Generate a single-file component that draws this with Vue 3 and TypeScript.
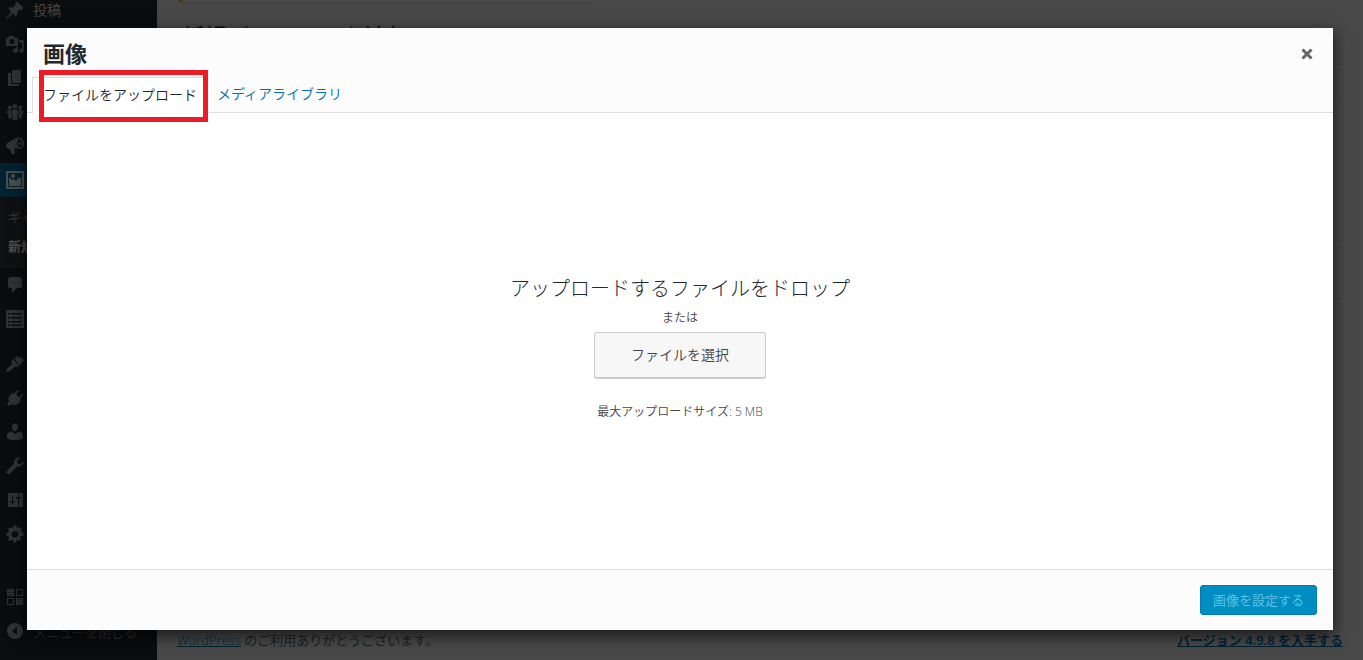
<script setup lang="ts">
import { ref } from 'vue'

interface MenuItem {
  name: string
  icon: string
  label?: string
  current?: boolean
  gap?: boolean
  submenu?: { text: string; strong?: boolean }[]
}

const menu: MenuItem[] = [
  {
    name: '投稿',
    label: '投稿',
    icon: 'M10.4 3l1-.9 1.4.1 5.3 5.2-.2 1.5-1.1.9-2.2-.3-2.5 2.4.2 3.2-1.6 1.1-2.8-2.9L2 18.7 1.3 18l5-6.3-2.8-2.9 1-1.5 3.3.1 2.7-2.5z',
  },
  {
    name: 'メディア',
    icon: 'M1 4h2l1-2h5l1 2h3v8H1zM7 5a2.500 2.500 0 1 0 0 5 2.500 2.500 0 0 0 0-5zM14 6h5v10.500a2.400 2.400 0 1 1-2-2.300V9h-3zM11 13h2v3.500a2.400 2.400 0 1 1-2-2.300z',
  },
  { name: '固定ページ', icon: 'M7 2h9v13H7zM3 5h3v11h8v2H3z' },
  {
    name: 'グループ',
    icon: 'M10 2a2.300 2.300 0 1 1 0 4.600A2.300 2.300 0 0 1 10 2zM5 3.500a2 2 0 1 1 0 4 2 2 0 0 1 0-4zM15 3.500a2 2 0 1 1 0 4 2 2 0 0 1 0-4zM7.500 7.500h5L14 11l-1.500 1.500V18h-5v-5.500L6 11zM2.500 8h4L5 11l1.500 2v3.500h-3V13L2 11zM13.500 8h4l.8 3-1.500 2v3.500h-3V13L15 11z',
  },
  {
    name: 'お知らせ',
    icon: 'M14 1.500c2.800 0 5 2.700 5 6s-2 5.500-4.500 5.500c-2.500-.8-4-1-5.500-.5l1 5.500H6.500L5 13c-2.500 0-4-1.200-4-3.200S2.500 6.500 5 5.500s5-4 9-4zm.2 1.700c-1.500 0-2.200 1.800-2 4.300s1.300 4 2.600 4 2.200-1.700 2.200-4-1.300-4.300-2.800-4.300zm.3 2.300c.9 0 1.400 1 1.400 2s-.5 2-1.100 2-1.300-1-1.300-2 .3-2 1-2z',
  },
  {
    name: 'ギャラリー',
    current: true,
    icon: 'M1 1h18v18H1zM3 3v14h14V3zM8 4a2 2 0 1 1 0 4 2 2 0 0 1 0-4zM4 7l3 3 2-1 2 2 3-4 2 2v7H4z',
    submenu: [{ text: 'ギャラリー' }, { text: '新規追加', strong: true }],
  },
  { name: 'コメント', icon: 'M5 2h10l2 2v8l-2 1h-3l-5 5v-5H5l-2-1V4z' },
  {
    name: 'フォーム',
    icon: 'M1 1h18v18H1zM3 4v1.500h2V4zM6 4v1.500h11V4zM3 8v1.500h2V8zM6 8v1.500h11V8zM3 12v1.500h2V12zM6 12v1.500h11V12zM3 15.500V17h2v-1.500zM6 15.500V17h11v-1.500z',
  },
  {
    name: '外観',
    gap: true,
    icon: 'M9.500 4.500L12 2l1.500 1.500L16 3l3 3-4.500 5.500zM8.500 5.500l5.500 6-1.500 1.500-2.500-.5L3.500 18 1.500 17.500 1 16l6-6-.5-2.500z',
  },
  {
    name: 'プラグイン',
    icon: 'M12.500 2.200c.8-.8 2 .4 1.200 1.200L11 6.200l3 3 2.700-2.800c.8-.8 2 .4 1.200 1.200L15.200 10.400l.8.900-2.500 4c-2.500 2-5 2-7 .7L3.500 18 2 16.500l2-3c-1-2.500-.5-4.500 1-6l3-2.800.8.800z',
  },
  {
    name: 'ユーザー',
    icon: 'M10 1.500c2 0 3 1.500 3 3.500s-1.300 4-3 4-3-2-3-4 1-3.500 3-3.500zM6 9.500l4 2.500 4-2.500c2.500.5 4 2 4 4.500v2.500c-4 2-12 2-16 0V14c0-2.500 1.500-4 4-4.500z',
  },
  {
    name: 'ツール',
    icon: 'M16.700 9.300c-1.300 1.300-3 1.700-4.700 1.200L5 17.500c-.8.8-2 .8-2.800 0s-.8-2 0-2.800l7-7c-.5-1.700-.1-3.500 1.300-4.800 1.300-1.300 3.200-1.700 4.800-1.100l-3.300 3.200.8 2.400 2.400.8 3.200-3.300c.5 1.500 0 3.200-1.700 4.400z',
  },
  {
    name: '設定項目',
    icon: 'M3 3h15v14H3zM7 5v6H5v1.500h2V15h1v-2.500h2V11H8V5zM13 5v2h-2v1.500h2V15h1V8.500h2V7h-2V5z',
  },
  {
    name: '設定',
    icon: 'M18 12h-2.200l-.9 1.500 1.500 1.700-1.800 1.800-1.700-1.300-1.500.7V18.500H8.600l-.6-2.100-1.500-.7-1.900 1.200L3 15.400l1.200-1.900-.7-1.500H1.500V9l2-.7.6-1.500L3 5l1.800-1.800 1.700 1.100L8 3.700 8.500 1.500h2.900l.6 2.200 1.500.6 1.800-1.200L17 5l-1.300 1.700.7 1.600 2.100.7v3zM10 7a3.300 3.300 0 1 0 0 6.600A3.300 3.300 0 0 0 10 7z',
  },
]

const tabs = ['ファイルをアップロード', 'メディアライブラリ']
const activeTab = ref(0)
const picker = ref<HTMLInputElement | null>(null)
</script>

<template>
  <div class="admin">
    <nav class="sidebar" aria-label="管理メニュー">
      <ul class="menu">
        <li v-for="item in menu" :key="item.name" :class="{ current: item.current, gap: item.gap }">
          <a href="#" class="menu-link" :aria-label="item.name">
            <svg class="icon" viewBox="0 0 20 20" aria-hidden="true">
              <path :d="item.icon" fill-rule="evenodd" />
            </svg>
            <span v-if="item.label">{{ item.label }}</span>
          </a>
          <ul v-if="item.submenu" class="submenu">
            <li v-for="sub in item.submenu" :key="sub.text">
              <a href="#" :class="{ strong: sub.strong }">{{ sub.text }}</a>
            </li>
          </ul>
        </li>
        <li class="gap-large">
          <a href="#" class="menu-link" aria-label="QR">
            <svg class="icon" viewBox="0 0 20 20" aria-hidden="true">
              <path
                fill-rule="evenodd"
                d="M2 2h7v7H2zM4 3v1h1V3zM6 3v1h1V3zM3 5v1h1V5zM5 5v1h1V5zM7 5v1h1V5zM4 7v1h1V7zM6 7v1h1V7zM11 2h7v7h-7zM12 3v5h5V3zM2 11h7v7H2zM3 12v5h5v-5zM11 11h7v7h-7zM13 12v1h1v-1zM15 12v1h1v-1zM12 14v1h1v-1zM14 14v1h1v-1zM16 14v1h1v-1zM13 16v1h1v-1zM15 16v1h1v-1z"
              />
            </svg>
          </a>
        </li>
        <li>
          <button type="button" class="menu-link collapse">
            <svg class="icon" viewBox="0 0 20 20" aria-hidden="true">
              <path fill-rule="evenodd" d="M10 2a8 8 0 1 0 0 16 8 8 0 0 0 0-16zM12 6v8L7 10z" />
            </svg>
            <span>メニューを閉じる</span>
          </button>
        </li>
      </ul>
    </nav>

    <main class="content">
      <div class="notice"></div>
      <h1>新規ギャラリーを追加</h1>
      <section class="postbox">
        <div class="postbox-head"></div>
        <div class="postbox-body"></div>
        <div class="postbox-actions"></div>
      </section>
      <footer class="page-footer">
        <span><a href="#">WordPress</a> のご利用ありがとうございます。</span>
        <a href="#" class="strong">バージョン 4.9.8 を入手する</a>
      </footer>
    </main>

    <div class="backdrop"></div>

    <div class="modal" role="dialog" aria-modal="true" aria-labelledby="modal-title">
      <header class="modal-head">
        <div class="title-row">
          <h2 id="modal-title">画像</h2>
          <button type="button" class="close" aria-label="閉じる">
            <svg viewBox="0 0 12 12" aria-hidden="true">
              <path d="M1.500 1.500l9 9M10.500 1.500l-9 9" />
            </svg>
          </button>
        </div>
        <div class="tabs" role="tablist">
          <button
            v-for="(tab, i) in tabs"
            :key="tab"
            type="button"
            role="tab"
            class="tab"
            :class="{ active: activeTab === i }"
            :aria-selected="activeTab === i"
            @click="activeTab = i"
          >
            {{ tab }}
          </button>
          <span class="highlight" aria-hidden="true"></span>
        </div>
      </header>
      <div class="uploader">
        <h3>アップロードするファイルをドロップ</h3>
        <p class="or">または</p>
        <button type="button" class="browse" @click="picker?.click()">ファイルを選択</button>
        <input ref="picker" type="file" hidden aria-label="ファイルを選択" />
        <p class="limit">最大アップロードサイズ: 5 MB</p>
      </div>
      <footer class="modal-foot">
        <button type="button" class="primary" disabled>画像を設定する</button>
      </footer>
    </div>
  </div>
</template>

<style>
body {
  margin: 0;
  background: #f1f1f1;
}
</style>

<style scoped>
.admin {
  position: relative;
  display: flex;
  height: 100vh;
  overflow: hidden;
  background: #f1f1f1;
  color: #444;
  font-family: 'Open Sans', 'Noto Sans CJK JP', sans-serif;
  font-size: 13px;
  font-weight: 350;
  line-height: 20px;
}

button {
  font-family: inherit;
  font-weight: inherit;
  cursor: pointer;
}

h1,
h2,
h3,
p,
ul {
  margin: 0;
  padding: 0;
}

ul {
  list-style: none;
}

.sidebar {
  flex: none;
  width: 157px;
  background: #23282d;
}

/* The menu is scrolled up slightly with the page. */
.menu {
  margin-top: -7px;
}

.menu-link {
  display: flex;
  align-items: center;
  gap: 8px;
  box-sizing: border-box;
  width: 100%;
  height: 34px;
  padding: 0 5px;
  color: #eee;
  font-size: 14px;
  text-decoration: none;
}

.icon {
  flex: none;
  width: 20px;
  height: 20px;
  fill: #9ea3a8;
}

.current > .menu-link {
  background: #0073aa;
}

.current .icon {
  fill: #fff;
}

.gap {
  margin-top: 11px;
}

.gap-large {
  margin-top: 29px;
}

.submenu {
  padding: 6px 0 7px;
  background: #32373c;
}

.submenu a {
  display: block;
  padding: 0 8px;
  color: #b4b9be;
  line-height: 29px;
  text-decoration: none;
}

.submenu a.strong {
  color: #fff;
  font-weight: 600;
}

.collapse {
  border: 0;
  background: none;
  color: #a0a5aa;
  font-size: 13px;
}

.content {
  display: flex;
  flex: 1;
  flex-direction: column;
  min-width: 0;
  padding: 0 20px;
}

.notice {
  width: 410px;
  height: 2px;
  border-left: 4px solid #ffb900;
  margin-left: 2px;
  background: #fff;
  box-shadow: 0 1px 1px rgba(0, 0, 0, 0.1);
}

h1 {
  margin: 18px 0 0 4px;
  color: #23282d;
  font-size: 23px;
  font-weight: 400;
  line-height: 32px;
}

.postbox {
  align-self: flex-end;
  width: 280px;
  margin-top: 12px;
  border: 1px solid #e5e5e5;
  background: #f5f5f5;
}

.postbox-head {
  height: 35px;
  border-bottom: 1px solid #e5e5e5;
}

.postbox-body {
  height: 146px;
  border-bottom: 1px solid #ddd;
}

.postbox-actions {
  height: 50px;
}

.page-footer {
  display: flex;
  justify-content: space-between;
  margin-top: auto;
  padding-bottom: 10px;
  color: #555d66;
}

.page-footer a {
  color: #0073aa;
}

.page-footer .strong {
  font-weight: 600;
}

.backdrop {
  position: absolute;
  inset: 0;
  background: rgba(0, 0, 0, 0.7);
}

.modal {
  position: absolute;
  inset: 28px 30px 30px 27px;
  display: flex;
  flex-direction: column;
  background: #fff;
  box-shadow: 0 5px 15px rgba(0, 0, 0, 0.7);
}

.modal-head {
  border-bottom: 1px solid #ddd;
  background: #fcfcfc;
}

.title-row {
  display: flex;
  align-items: center;
  justify-content: space-between;
  height: 49px;
  padding: 0 16px;
}

h2 {
  color: #23282d;
  font-size: 22px;
  font-weight: 700;
  line-height: 50px;
}

.close {
  display: flex;
  padding: 6px 4px 4px;
  border: 0;
  background: none;
}

.close svg {
  width: 12px;
  height: 12px;
  stroke: #666;
  stroke-width: 3;
}

.tabs {
  position: relative;
  display: flex;
  margin-bottom: -1px;
  padding-left: 6px;
}

.tab {
  box-sizing: border-box;
  height: 36px;
  padding: 0 10px 2px;
  border: 0;
  background: none;
  color: #0073aa;
  font-size: 14px;
  line-height: 34px;
}

.tab.active {
  margin: 0 -1px;
  padding-bottom: 3px;
  border: 1px solid #ddd;
  border-bottom: 0;
  background: #fff;
  color: #23282d;
}

.highlight {
  position: absolute;
  top: -7px;
  left: 12px;
  box-sizing: border-box;
  width: 169px;
  height: 52px;
  border: 5px solid #ed1c24;
  pointer-events: none;
}

.uploader {
  display: flex;
  flex: 1;
  flex-direction: column;
  align-items: center;
  justify-content: center;
  padding-top: 14px;
}

h3 {
  color: #23282d;
  font-size: 20px;
  font-weight: 300;
  line-height: 28px;
}

.or {
  margin: 6px 0 5px;
  font-size: 12px;
  line-height: 18px;
}

.browse {
  height: 46px;
  padding: 0 36px 2px;
  border: 1px solid #ccc;
  border-radius: 3px;
  background: #f7f7f7;
  box-shadow: 0 1px 0 #ccc;
  color: #444;
  font-size: 14px;
}

.limit {
  margin-top: 25px;
  font-size: 12px;
  line-height: 18px;
}

.modal-foot {
  display: flex;
  align-items: center;
  justify-content: flex-end;
  height: 60px;
  padding: 0 16px;
  border-top: 1px solid #ddd;
  background: #fcfcfc;
}

.primary {
  height: 30px;
  padding: 0 12px 2px;
  border: 1px solid #007cb2;
  border-radius: 3px;
  background: #008ec2;
  color: #66c6e4;
  font-size: 13px;
}
</style>
